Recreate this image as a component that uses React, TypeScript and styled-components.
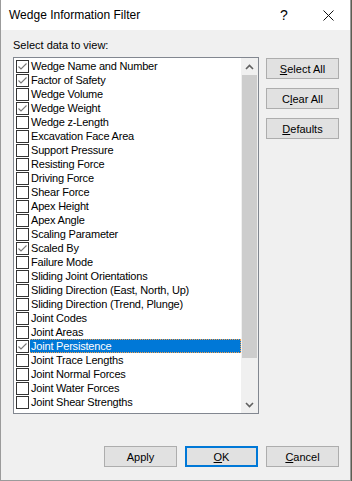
import React, { ReactElement } from "react";
import styled, { createGlobalStyle } from "styled-components";

const texts = {
  title: "Wedge Information Filter",
  label: "Select data to view:",
};

interface Item {
  label: string;
  checked?: boolean;
  selected?: boolean;
}

const items: Item[] = [
  { label: "Wedge Name and Number", checked: true },
  { label: "Factor of Safety", checked: true },
  { label: "Wedge Volume" },
  { label: "Wedge Weight", checked: true },
  { label: "Wedge z-Length" },
  { label: "Excavation Face Area" },
  { label: "Support Pressure" },
  { label: "Resisting Force" },
  { label: "Driving Force" },
  { label: "Shear Force" },
  { label: "Apex Height" },
  { label: "Apex Angle" },
  { label: "Scaling Parameter" },
  { label: "Scaled By", checked: true },
  { label: "Failure Mode" },
  { label: "Sliding Joint Orientations" },
  { label: "Sliding Direction (East, North, Up)" },
  { label: "Sliding Direction (Trend, Plunge)" },
  { label: "Joint Codes" },
  { label: "Joint Areas" },
  { label: "Joint Persistence", checked: true, selected: true },
  { label: "Joint Trace Lengths" },
  { label: "Joint Normal Forces" },
  { label: "Joint Water Forces" },
  { label: "Joint Shear Strengths" },
];

const GlobalStyle = createGlobalStyle`
  body {
    margin: 0;
    background: #5d5d52;
    font-family: "Liberation Sans", Arial, sans-serif;
    font-size: 11px;
    color: #000;
  }
`;

const Window = styled.div`
  width: 351px;
  height: 481px;
  box-sizing: border-box;
  border: 1px solid #9b9b9b;
  border-top: none;
  background: #f0f0f0;
  display: flex;
  flex-direction: column;
`;

const TitleBar = styled.div`
  height: 30px;
  background: #fff;
  display: flex;
  align-items: center;
  padding-left: 8px;
`;

const Title = styled.div`
  flex: 1;
  font-size: 12px;
`;

const TitleButton = styled.div<{ $width: number }>`
  width: ${(p) => p.$width}px;
  height: 30px;
  display: flex;
  align-items: center;
  justify-content: center;
  font-size: 14px;
`;

const HelpButton = styled(TitleButton)`
  margin-right: 8px;
`;

const Body = styled.div`
  flex: 1;
  display: flex;
  flex-direction: column;
  padding: 8px 11px 0 12px;
`;

const Label = styled.div`
  height: 14px;
  line-height: 14px;
  margin-bottom: 5px;
`;

const Main = styled.div`
  display: flex;
  gap: 7px;
`;

const ListBox = styled.div`
  width: 246px;
  height: 357px;
  box-sizing: border-box;
  border: 1px solid #828790;
  background: #fff;
  display: flex;
`;

const List = styled.div`
  flex: 1;
  padding: 1px 0 0 2px;
  overflow: hidden;
`;

const Row = styled.div`
  height: 14px;
  display: flex;
  align-items: flex-start;
`;

const Box = styled.svg`
  margin-top: 1px;
  flex: none;
`;

const RowText = styled.div<{ $selected?: boolean }>`
  flex: 1;
  height: 14px;
  line-height: 12px;
  margin-left: 1px;
  padding-left: 1px;
  box-sizing: border-box;
  white-space: nowrap;
  letter-spacing: -0.2px;
  background: ${(p) => (p.$selected ? "#0078d7" : "transparent")};
  color: ${(p) => (p.$selected ? "#fff" : "#000")};
  border: 1px dotted ${(p) => (p.$selected ? "#f4a04c" : "transparent")};
  border-left-width: 0;
`;

const ScrollBar = styled.div`
  width: 17px;
  background: #f0f0f0;
  display: flex;
  flex-direction: column;
`;

const ScrollArrow = styled.div`
  height: 17px;
  display: flex;
  align-items: center;
  justify-content: center;
`;

const Thumb = styled.div`
  height: 283px;
  margin: 0 1px;
  background: #cdcdcd;
`;

const Spacer = styled.div`
  flex: 1;
`;

const SideButtons = styled.div`
  display: flex;
  flex-direction: column;
  gap: 9px;
  padding-top: 1px;
`;

const Button = styled.div<{ $default?: boolean }>`
  width: 73px;
  height: 21px;
  box-sizing: border-box;
  display: flex;
  align-items: center;
  justify-content: center;
  background: #e1e1e1;
  border: ${(p) => (p.$default ? "2px solid #0078d7" : "1px solid #adadad")};
  font-size: 11px;
  u {
    text-decoration: underline;
    text-underline-offset: 1px;
  }
`;

const Footer = styled.div`
  display: flex;
  justify-content: flex-end;
  gap: 8px;
  margin-top: 32px;
`;

const CheckBox = ({ checked }: { checked?: boolean }) => (
  <Box width="13" height="13" viewBox="0 0 13 13">
    <rect x="0.5" y="0.5" width="12" height="12" fill="#fff" stroke="#333" />
    {checked && (
      <polyline
        points="2.5,6.5 5,9 10.5,3.5"
        fill="none"
        stroke="#777"
        strokeWidth="1.1"
      />
    )}
  </Box>
);

const Chevron = ({ down }: { down?: boolean }) => (
  <svg width="9" height="6" viewBox="0 0 9 6">
    <polyline
      points={down ? "1,1 4.5,4.5 8,1" : "1,5 4.5,1.5 8,5"}
      fill="none"
      stroke="#606060"
      strokeWidth="1.6"
    />
  </svg>
);

const App = (): ReactElement => (
  <>
    <GlobalStyle />
    <Window>
      <TitleBar>
        <Title>{texts.title}</Title>
        <HelpButton $width={28}>?</HelpButton>
        <TitleButton $width={44}>
          <svg width="11" height="11" viewBox="0 0 11 11">
            <path d="M0.5 0.5 L10.5 10.5 M10.5 0.5 L0.5 10.5" stroke="#111" strokeWidth="1" />
          </svg>
        </TitleButton>
      </TitleBar>
      <Body>
        <Label>{texts.label}</Label>
        <Main>
          <ListBox>
            <List>
              {items.map((item) => (
                <Row key={item.label}>
                  <CheckBox checked={item.checked} />
                  <RowText $selected={item.selected}>{item.label}</RowText>
                </Row>
              ))}
            </List>
            <ScrollBar>
              <ScrollArrow>
                <Chevron />
              </ScrollArrow>
              <Thumb />
              <Spacer />
              <ScrollArrow>
                <Chevron down />
              </ScrollArrow>
            </ScrollBar>
          </ListBox>
          <SideButtons>
            <Button>
              <u>S</u>elect All
            </Button>
            <Button>
              C<u>l</u>ear All
            </Button>
            <Button>
              <u>D</u>efaults
            </Button>
          </SideButtons>
        </Main>
        <Footer>
          <Button>Apply</Button>
          <Button $default>
            <u>O</u>K
          </Button>
          <Button>
            <u>C</u>ancel
          </Button>
        </Footer>
      </Body>
    </Window>
  </>
);

export default App;
